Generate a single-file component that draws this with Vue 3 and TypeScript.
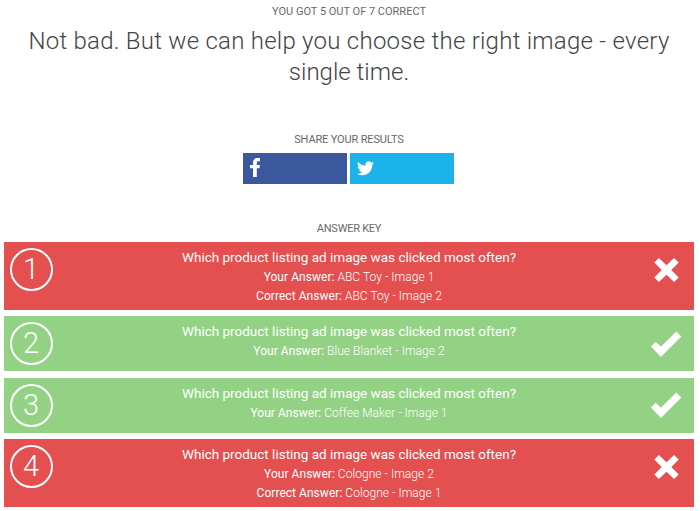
<script setup lang="ts">
interface Answer {
  id: number
  yours: string
  correct?: string
}

const question = 'Which product listing ad image was clicked most often?'

const answers: Answer[] = [
  { id: 1, yours: 'ABC Toy - Image 1', correct: 'ABC Toy - Image 2' },
  { id: 2, yours: 'Blue Blanket - Image 2' },
  { id: 3, yours: 'Coffee Maker - Image 1' },
  { id: 4, yours: 'Cologne - Image 2', correct: 'Cologne - Image 1' },
]
</script>

<template>
  <main class="results">
    <p class="label">YOU GOT 5 OUT OF 7 CORRECT</p>
    <h1 class="headline">Not bad. But we can help you choose the right image - every <span class="tail">single time.</span></h1>

    <p class="label share-label">SHARE YOUR RESULTS</p>
    <div class="share">
      <button class="share-button facebook" type="button">
        <svg class="fb-icon" viewBox="0 0 10 19">
          <path d="M10 .1v3.200H8.400C7 3.300 6.800 3.900 6.800 4.800v2.100h3.100l-.4 3.300H6.800V19H3v-8.800H0V6.900h3V4.500C3 1.600 4.800 0 7.400 0 8.700 0 9.700.1 10 .1z" />
        </svg>
      </button>
      <button class="share-button twitter" type="button">
        <svg class="tw-icon" viewBox="0 0 24 20">
          <path d="M24 2.370a9.800 9.800 0 0 1-2.830.780A4.930 4.930 0 0 0 23.340.420a9.860 9.860 0 0 1-3.130 1.190A4.920 4.920 0 0 0 11.820 6.100 13.980 13.980 0 0 1 1.670.950a4.930 4.930 0 0 0 1.520 6.570A4.900 4.900 0 0 1 .960 6.910v.060a4.930 4.930 0 0 0 3.950 4.830 4.900 4.900 0 0 1-2.220.080 4.930 4.930 0 0 0 4.600 3.420A9.880 9.880 0 0 1 0 17.340a13.940 13.940 0 0 0 7.550 2.210c9.050 0 14-7.500 14-14v-.640A10 10 0 0 0 24 2.370z" />
        </svg>
      </button>
    </div>

    <p class="label key-label">ANSWER KEY</p>
    <section class="key">
      <article v-for="answer in answers" :key="answer.id" class="row" :class="answer.correct ? 'wrong' : 'right'">
        <span class="number">{{ answer.id }}</span>
        <div class="copy">
          <h2 class="question">{{ question }}</h2>
          <p class="line"><b>Your Answer:</b> {{ answer.yours }}</p>
          <p v-if="answer.correct" class="line"><b>Correct Answer:</b> {{ answer.correct }}</p>
        </div>
        <svg v-if="answer.correct" class="mark" viewBox="0 0 32 28">
          <path d="M8.900 2 16.500 9.200 24.100 2 28.700 6.600 21.300 14 28.700 21.400 24.100 26 16.500 18.800 8.900 26 4.300 21.400 11.700 14 4.300 6.600z" />
        </svg>
        <svg v-else class="mark" viewBox="0 0 32 28">
          <path d="M1 16.500 5.700 11.700 10.900 16.700 26.300 1.500 31.300 6.500 10.900 27z" />
        </svg>
      </article>
    </section>
  </main>
</template>

<style>
body {
  margin: 0;
  background: #fff;
}
</style>

<style scoped>
.results {
  box-sizing: border-box;
  width: 700px;
  height: 511px;
  padding: 5px 6px 0 4px;
  overflow: hidden;
  color: #444;
  font-family: Roboto, "Liberation Sans", sans-serif;
  text-align: center;
}

p,
h1,
h2 {
  margin: 0;
}

.label {
  color: #686868;
  font-size: 11px;
  line-height: 14px;
}

.headline {
  margin-top: 7px;
  font-size: 24px;
  font-weight: 300;
  letter-spacing: 0.25px;
  line-height: 31px;
}

.tail {
  letter-spacing: 0;
}

.share-label {
  margin-top: 45px;
  letter-spacing: -0.15px;
}

.share {
  display: flex;
  justify-content: center;
  gap: 3.500px;
  width: 211px;
  margin: 6px auto 0 239px;
}

.share-button {
  display: flex;
  flex: 1;
  align-items: flex-start;
  box-sizing: border-box;
  height: 31px;
  padding: 5px 7px;
  border: 0;
}

.share-button svg {
  fill: #fff;
}

.facebook {
  background: #3b579d;
}

.twitter {
  background: #1cb2ea;
}

.fb-icon {
  width: 10px;
  height: 19px;
}

.tw-icon {
  width: 17px;
  height: 15px;
  margin-top: 3px;
}

.key-label {
  margin-top: 38px;
  letter-spacing: -0.25px;
}

.key {
  display: flex;
  flex-direction: column;
  gap: 6.300px;
  margin-top: 6px;
}

.row {
  display: grid;
  grid-template-columns: 56px 1fr 56px;
  align-items: start;
  box-sizing: border-box;
  height: 55px;
  padding-top: 6px;
  color: #fff;
}

.wrong {
  height: 68.200px;
  background: #e44f50;
}

.right {
  background: #93d284;
}

.number {
  box-sizing: border-box;
  width: 43px;
  height: 43px;
  margin-left: 6px;
  padding-right: 1px;
  border: 2px solid #fff;
  border-radius: 50%;
  font-size: 29px;
  font-weight: 300;
  line-height: 39px;
}

.question {
  font-size: 13.500px;
  font-weight: 400;
  line-height: 18px;
}

.line {
  font-size: 12px;
  font-weight: 300;
  letter-spacing: 0.04px;
  line-height: 19px;
}

.line:nth-of-type(1) {
  margin-top: 2px;
}

.line b {
  font-weight: 400;
}

.mark {
  width: 32px;
  height: 28px;
  margin: 7.600px 0 0 11.500px;
  fill: #fff;
}
</style>
